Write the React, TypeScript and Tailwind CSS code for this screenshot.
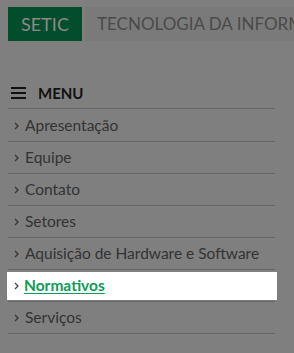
import React from "react";

const items = [
  "Apresentação",
  "Equipe",
  "Contato",
  "Setores",
  "Aquisição de Hardware e Software",
  "Normativos",
  "Serviços",
];

const Chevron = () => (
  <svg width="6" height="8" viewBox="0 0 6 8" className="shrink-0">
    <path d="M1 1l3 3-3 3" fill="none" stroke="currentColor" strokeWidth="1.3" />
  </svg>
);

const App = () => {
  return (
    <div
      className="w-[294px] h-[353px] overflow-hidden bg-[#7f7f7f]"
      style={{ fontFamily: "Lato, 'Open Sans', sans-serif" }}
    >
      <div className="flex pt-[7px] pl-2 gap-[3px]">
        <div className="h-[34px] w-[74px] bg-[#024d2b] text-[#8a8a8a] text-[18px] flex items-center justify-center shrink-0">
          SETIC
        </div>
        <div className="h-[34px] flex-1 bg-[#7a7a7a] text-[#4a4a4a] text-[17px] flex items-center pl-[12px] whitespace-nowrap overflow-hidden">
          TECNOLOGIA DA INFORMAÇÃO
        </div>
      </div>

      <div className="mt-[39px] ml-2 w-[267px]">
        <div className="flex items-center h-[29px] border-b border-[#666] pb-[2px]">
          <div className="flex flex-col gap-[3px] ml-[3px] w-[15px]">
            <span className="h-[2px] bg-[#111]" />
            <span className="h-[2px] bg-[#111]" />
            <span className="h-[2px] bg-[#111]" />
          </div>
          <span className="ml-3 text-[15px] font-bold text-[#111]">MENU</span>
        </div>
        {items.map((t, i) => {
          const active = t === "Normativos";
          return (
            <div
              key={t}
              className={`${i === 0 ? "h-[33px]" : "h-[32px]"} border-b border-[#666] flex items-center`}
            >
              {active ? (
                <div className="-ml-px -mr-[2px] flex-1 h-[28px] mt-[1px] bg-white flex items-center pl-[7px] gap-[4px] text-[#444]">
                  <Chevron />
                  <span className="text-[15.5px] font-bold text-[#0e9c57] underline underline-offset-2">
                    {t}
                  </span>
                </div>
              ) : (
                <div className="flex items-center pl-[6px] gap-[5px] text-[#333] pt-[1px]">
                  <Chevron />
                  <span className="text-[15.5px] text-[#333]">{t}</span>
                </div>
              )}
            </div>
          );
        })}
      </div>
    </div>
  );
};

export default App;
